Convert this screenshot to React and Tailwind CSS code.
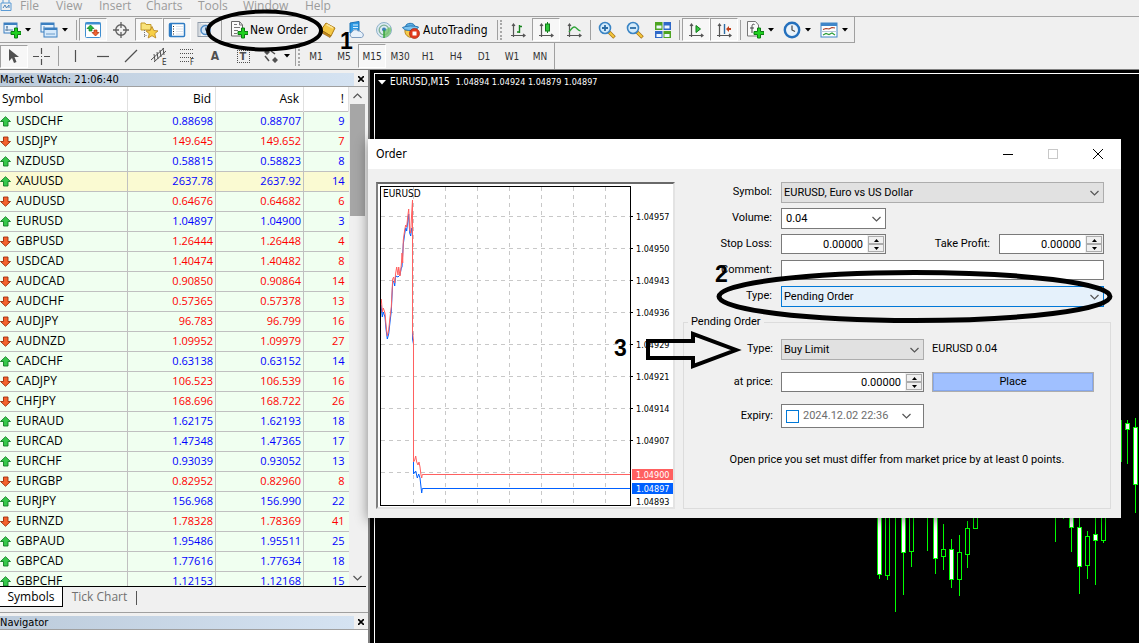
import React, { useState } from "react";

const quotes = [
  ["USDCHF", "0.88698", "0.88707", 9, "up"],
  ["USDJPY", "149.645", "149.652", 7, "down"],
  ["NZDUSD", "0.58815", "0.58823", 8, "up"],
  ["XAUUSD", "2637.78", "2637.92", 14, "up"],
  ["AUDUSD", "0.64676", "0.64682", 6, "down"],
  ["EURUSD", "1.04897", "1.04900", 3, "up"],
  ["GBPUSD", "1.26444", "1.26448", 4, "down"],
  ["USDCAD", "1.40474", "1.40482", 8, "down"],
  ["AUDCAD", "0.90850", "0.90864", 14, "down"],
  ["AUDCHF", "0.57365", "0.57378", 13, "down"],
  ["AUDJPY", "96.783", "96.799", 16, "down"],
  ["AUDNZD", "1.09952", "1.09979", 27, "down"],
  ["CADCHF", "0.63138", "0.63152", 14, "up"],
  ["CADJPY", "106.523", "106.539", 16, "down"],
  ["CHFJPY", "168.696", "168.722", 26, "down"],
  ["EURAUD", "1.62175", "1.62193", 18, "up"],
  ["EURCAD", "1.47348", "1.47365", 17, "up"],
  ["EURCHF", "0.93039", "0.93052", 13, "up"],
  ["EURGBP", "0.82952", "0.82960", 8, "down"],
  ["EURJPY", "156.968", "156.990", 22, "up"],
  ["EURNZD", "1.78328", "1.78369", 41, "down"],
  ["GBPAUD", "1.95486", "1.95511", 25, "up"],
  ["GBPCAD", "1.77616", "1.77634", 18, "up"],
  ["GBPCHF", "1.12153", "1.12168", 15, "up"],
];

const priceColor = (dir) => (dir === "up" ? "text-[#0000ff]" : "text-[#ff0000]");

// x, wick top, wick bottom, body top, body bottom, filled
const candles = [
  [504, 436, 505, 436, 500, true],
  [512, 436, 506, 436, 501, false],
  [520, 436, 538],
  [528, 436, 521, 436, 478, true],
  [536, 436, 493, 436, 477, false],
  [552, 436, 477],
  [560, 436, 500, 436, 484, true],
  [568, 450, 496, 475, 482, false],
  [576, 465, 514, 475, 505, true],
  [584, 461, 522, 478, 505, false],
  [592, 447, 494, 454, 480, false],
  [600, 436, 455, 436, 454, false],
  [680, 436, 468],
  [688, 436, 445],
  [696, 436, 478, 436, 453, true],
  [704, 436, 520, 453, 492, true],
  [712, 457, 505, 462, 491, false],
  [720, 436, 511, 460, 466, true],
  [728, 436, 469, 436, 466, false],
  [746, 346, 388],
  [752, 346, 390, 349, 355, true],
  [760, 344, 439, 353, 410, true],
];

const priceLabels = ["1.04957", "1.04950", "1.04943", "1.04936", "1.04929", "1.04921", "1.04914", "1.04907"];

const Svg = ({ size = 18, children }) => (
  <svg width={size} height={size} viewBox="0 0 18 18" fill="none" aria-hidden="true" className="shrink-0">{children}</svg>
);

const Plus = () => <path d="M11.500 7h3v3.500h3.500v3h-3.500v3.500h-3v-3.500H8v-3h3.500z" fill="#1fd11f" stroke="#0b7d12" />;

const NewChartIcon = () => (
  <Svg>
    <rect x="1" y="2" width="13" height="10" fill="#e8f3fd" stroke="#3b7fc0" />
    <path d="M1 3h13" stroke="#3b7fc0" strokeWidth="2" />
    <path d="M4 5v5M3 6h2M2 9h8" stroke="#5b7f9f" />
    <Plus />
  </Svg>
);

const ProfilesIcon = () => (
  <Svg>
    <rect x="1" y="2" width="13" height="9" fill="#e8f3fd" stroke="#3b7fc0" />
    <path d="M1 3h13" stroke="#3b7fc0" strokeWidth="2" />
    <rect x="4" y="7" width="13" height="9" fill="#d5e9fb" stroke="#3b7fc0" />
    <path d="M4 8h13" stroke="#3b7fc0" strokeWidth="2" />
    <path d="M6 13h9M4 5v4" stroke="#6b9bc9" />
  </Svg>
);

const MarketWatchIcon = () => (
  <Svg>
    <rect x="1.500" y="1.500" width="15" height="15" rx="1" fill="#fff" stroke="#3f8ed0" />
    <path d="M1.500 2.500h15" stroke="#3f8ed0" strokeWidth="2" />
    <path d="M6.500 4L10 7.500H8V10H5V7.500H3z" fill="#25b838" stroke="#0c7a1c" strokeWidth=".7" />
    <path d="M11.500 15L8 11.500h2V9h3v2.500h2z" fill="#f2622f" stroke="#a82e0a" strokeWidth=".7" />
  </Svg>
);

const TargetIcon = () => (
  <Svg>
    <circle cx="9" cy="9" r="5.200" stroke="#606060" strokeWidth="1.400" />
    <path d="M9 1v6M9 11v6M1 9h6M11 9h6" stroke="#606060" strokeWidth="1.300" />
  </Svg>
);

const StarPath = ({ x = 0, y = 0 }) => (
  <path transform={`translate(${x} ${y})`} d="M6 0l1.800 4 4.200.4-3.200 2.800 1 4.300L6 9.200 2.200 11.500l1-4.300L0 4.400 4.200 4z" fill="#f7cf45" stroke="#b5801a" strokeWidth=".8" />
);

const NavigatorIcon = () => (
  <Svg>
    <path d="M1 2h4l1 1.500h5V9H1z" fill="#f8e27a" stroke="#c29a2c" />
    <path d="M4.500 9v7M4.500 14.500H7" stroke="#777" strokeDasharray="1 1" />
    <StarPath x={6} y={5.5} />
  </Svg>
);

const TerminalIcon = () => (
  <Svg>
    <rect x="1.500" y="2.500" width="15" height="13" rx="1" fill="#fff" stroke="#2f7cc4" strokeWidth="1.500" />
    <path d="M3 3v12" stroke="#2f7cc4" strokeWidth="2" />
    <path d="M5 5.500h1M5 8h1M5 10.500h1M5 13h1" stroke="#333" />
    <path d="M8 5.500h7M8 8h7M8 10.500h7M8 13h7" stroke="#dde3ec" />
  </Svg>
);

const TesterIcon = () => (
  <Svg>
    <rect x="2" y="1.500" width="12" height="14" fill="#f5f5f5" stroke="#8e9aa8" />
    <path d="M4 2v13M5 4h8" stroke="#b9c3cd" />
    <circle cx="9.500" cy="9" r="4.500" fill="#cfe3f6" stroke="#4f8cc6" strokeWidth="1.500" />
    <path d="M9.500 6.500V9l1.500 1.500" stroke="#47627d" />
  </Svg>
);

const NewOrderIcon = () => (
  <Svg>
    <path d="M1.500.500h8L12.500 4v11h-11z" fill="#fafafa" stroke="#666" />
    <path d="M9.500.500V4h3M4 3.500h3M4 6.500h6M4 9.500h4M4 12.500h3" stroke="#777" />
    <Plus />
  </Svg>
);

const MetaEditorIcon = () => (
  <Svg>
    <path d="M2 9L7 2l9 5-4 8z" fill="#f4c744" stroke="#ae7a10" />
    <path d="M2 9l10 6-1 1.500L3 12z" fill="#c68a1c" stroke="#8f6110" strokeWidth=".6" />
    <path d="M7.500 3.500L14 7" stroke="#fbe597" strokeWidth="1.500" />
  </Svg>
);

const CloudIcon = () => (
  <Svg>
    <path d="M3 2l9-1.500V12H3z" fill="#2e9ae4" stroke="#1b72b5" />
    <path d="M6 4h5M6 6.500h5M6 9h4" stroke="#d9f0ff" />
    <path d="M5 16.500a3 3 0 010-5.500 3.500 3.500 0 016-1 3 3 0 013.500 1.500 2.600 2.600 0 010 5z" fill="#e7f1fb" stroke="#7d9cc0" />
  </Svg>
);

const SignalIcon = () => (
  <Svg>
    <circle cx="9" cy="9" r="7.500" fill="#dceaf2" stroke="#8fb2cb" />
    <circle cx="9" cy="9" r="4.800" stroke="#7fb195" strokeWidth="1.300" />
    <path d="M9 9v7.500A7.500 7.500 0 0015.500 6z" fill="#77c66e" opacity=".8" />
    <circle cx="9" cy="8.500" r="2" fill="#3b81ba" />
    <path d="M9 9v8" stroke="#36a43b" strokeWidth="1.500" />
  </Svg>
);

const AutoTradingIcon = () => (
  <Svg>
    <path d="M3 9c-.5 4 2 6.500 5.500 7.500L14 9z" fill="#f6cc4b" stroke="#b78118" />
    <path d="M3.500 5.500C4 1.500 12 1 13 5.500z" fill="#5fb2e6" stroke="#2a78b4" />
    <path d="M.500 6.500c4-2 12-2 16-.5-1 4-14 5-16 .5z" fill="#7cc3ef" stroke="#2a78b4" />
    <circle cx="12.500" cy="12.500" r="5" fill="#e23a1c" stroke="#a3230d" strokeWidth=".7" />
    <rect x="10.500" y="10.500" width="4" height="4" fill="#fff" />
  </Svg>
);

const Axes = () => <path d="M4.500 3v13M2 14.500h14M3 5l1.500-2L6 5M14 13l2 1.500-2 1.500" stroke="#555" strokeWidth="1.200" />;

const BarChartIcon = () => (
  <Svg>
    <Axes />
    <path d="M10.500 4v8M10.500 5.500H13M8 11h2.500" stroke="#16831d" strokeWidth="1.400" />
  </Svg>
);

const CandleIcon = () => (
  <Svg>
    <Axes />
    <path d="M10.500 1v11" stroke="#16831d" />
    <rect x="8.500" y="3" width="4" height="7" fill="#2fc73a" stroke="#0f7a18" />
  </Svg>
);

const LineChartIcon = () => (
  <Svg>
    <Axes />
    <path d="M4 11c2-3 3.500-5 5.500-5s2.500 3 6 4" stroke="#2fa439" strokeWidth="1.300" />
  </Svg>
);

const ZoomIcon = ({ plus }) => (
  <Svg>
    <path d="M11 11l5.500 5.500" stroke="#a9761a" strokeWidth="3.600" />
    <path d="M11.500 11.500l4.500 4.500" stroke="#f5c83c" strokeWidth="2" />
    <circle cx="7" cy="7" r="5.500" fill="#d3ebfb" stroke="#3a84c4" strokeWidth="1.600" />
    <path d={plus ? "M4 7h6M7 4v6" : "M4 7h6"} stroke="#2b6ca5" strokeWidth="1.800" />
  </Svg>
);

const TileIcon = () => (
  <Svg>
    <path d="M1 1h8v8H1zM9 10h8v7H9z" fill="#4da422" />
    <path d="M9 1h8v8H9zM1 10h8v7H1z" fill="#2e68c8" />
    <path d="M2.500 6h5M10.500 6h5M2.500 14.500h5M10.500 14.500h5" stroke="#eef7ff" strokeWidth="3" />
    <path d="M1 9.500h16M9 1v16" stroke="#f0f0f0" />
  </Svg>
);

const ScrollIcon = () => (
  <Svg>
    <Axes />
    <path d="M9 4.500L13.500 8 9 11.500z" fill="#35c940" stroke="#0f7a18" />
  </Svg>
);

const ShiftIcon = () => (
  <Svg>
    <Axes />
    <path d="M9.500 3v10" stroke="#2b6ca5" strokeWidth="1.400" />
    <path d="M11 8l3-3v2h2v2h-2v2z" fill="#c0401b" />
  </Svg>
);

const IndicatorIcon = () => (
  <Svg>
    <path d="M1.500.500h8L12.500 4v11h-11z" fill="#fafafa" stroke="#777" />
    <path d="M8.500 3.500c-2-1-2.500.5-2.500 2V12M4 7h4" stroke="#444" />
    <Plus />
  </Svg>
);

const ClockIcon = () => (
  <Svg>
    <circle cx="9" cy="9" r="7.200" fill="#eaf3fb" stroke="#2470bd" strokeWidth="2.400" />
    <path d="M9 4.500V9l3 1.500" stroke="#444" strokeWidth="1.200" />
  </Svg>
);

const TemplateIcon = () => (
  <Svg>
    <rect x="1" y="2" width="16" height="14" fill="#fff" stroke="#3f86c8" />
    <path d="M1 3.500h16" stroke="#3f86c8" strokeWidth="3" />
    <path d="M3 8.500l3-1 3 .5 3-1.500 3 .5" stroke="#a83a20" strokeWidth="1.200" />
    <path d="M1 10.500h16" stroke="#b7c9da" />
    <path d="M3 14l3-1.500 3 1 3-1.500 3 2" stroke="#2c9d38" strokeWidth="1.200" />
  </Svg>
);

const Caret = () => (
  <svg width="6" height="4" viewBox="0 0 6 4" aria-hidden="true" className="shrink-0"><path d="M0 0h6L3 3.500z" fill="#000" /></svg>
);

const Separator = () => <div className="mx-[2px] h-5 w-px shrink-0 bg-[#a0a0a0]" />;

const Grip = () => <div className="mr-px h-5 w-[3px] shrink-0 border-l-2 border-dotted border-[#a8a8a8]" />;

const ToolButton = ({ label, pressed, children }) => (
  <button
    aria-label={label}
    aria-pressed={!!pressed}
    className={`flex h-[23px] w-7 shrink-0 items-center justify-center border ${pressed ? "border-t-[#a0a0a0] border-l-[#a0a0a0] border-r-white border-b-white bg-[#f7f7f7]" : "border-transparent"}`}
  >
    {children}
  </button>
);

const MenuButton = ({ label, children }) => (
  <button aria-label={label} className="flex h-[23px] w-[37px] shrink-0 items-center gap-1 pl-[3px]">
    {children}
    <Caret />
  </button>
);

const MenuBar = () => (
  <nav className="flex h-4 shrink-0 items-start font-['Open_Sans',sans-serif] text-[12px] leading-[11px] text-[#9b9b9b]">
    <svg width="12" height="11" viewBox="0 0 12 11" fill="none" aria-hidden="true" className="mr-2 shrink-0">
      <path d="M1 3h10v7.500H1zM3 0v3M9 0v3" stroke="#5b9bd5" />
      <path d="M3 8l2-3 1.500 3L9 5v3" stroke="#4a82b8" />
    </svg>
    <a href="#file" className="w-9">File</a>
    <a href="#view" className="w-[43px]">View</a>
    <a href="#insert" className="w-[47px]">Insert</a>
    <a href="#charts" className="w-[52px]">Charts</a>
    <a href="#tools" className="w-[45px]">Tools</a>
    <a href="#window" className="w-[62px]">Window</a>
    <a href="#help">Help</a>
  </nav>
);

const MainToolbar = () => (
  <div className="flex h-[27px] shrink-0 border-t border-[#a0a0a0]">
    <div className="flex items-center border-r border-b border-[#a0a0a0]">
      <MenuButton label="New chart"><NewChartIcon /></MenuButton>
      <MenuButton label="Profiles"><ProfilesIcon /></MenuButton>
      <Separator />
      <ToolButton label="Market Watch" pressed><MarketWatchIcon /></ToolButton>
      <ToolButton label="Data Window"><TargetIcon /></ToolButton>
      <ToolButton label="Navigator" pressed><NavigatorIcon /></ToolButton>
      <ToolButton label="Terminal" pressed><TerminalIcon /></ToolButton>
      <ToolButton label="Strategy Tester"><TesterIcon /></ToolButton>
      <Separator />
      <button className="flex w-[90px] shrink-0 items-center gap-[2px] pl-[6px] text-[12px] whitespace-nowrap"><NewOrderIcon />New Order</button>
      <ToolButton label="MetaEditor"><MetaEditorIcon /></ToolButton>
      <ToolButton label="Cloud storage"><CloudIcon /></ToolButton>
      <ToolButton label="Signals"><SignalIcon /></ToolButton>
      <button className="flex w-[97px] shrink-0 items-center gap-[3px] pl-1 text-[12px] whitespace-nowrap"><AutoTradingIcon />AutoTrading</button>
      <Separator />
      <Grip />
      <ToolButton label="Bar chart"><BarChartIcon /></ToolButton>
      <ToolButton label="Candlesticks" pressed><CandleIcon /></ToolButton>
      <ToolButton label="Line chart"><LineChartIcon /></ToolButton>
      <Separator />
      <ToolButton label="Zoom in"><ZoomIcon plus /></ToolButton>
      <ToolButton label="Zoom out"><ZoomIcon /></ToolButton>
      <ToolButton label="Tile windows"><TileIcon /></ToolButton>
      <Separator />
      <ToolButton label="Auto scroll" pressed><ScrollIcon /></ToolButton>
      <ToolButton label="Chart shift" pressed><ShiftIcon /></ToolButton>
      <Separator />
      <MenuButton label="Indicators"><IndicatorIcon /></MenuButton>
      <MenuButton label="Periods"><ClockIcon /></MenuButton>
      <MenuButton label="Templates"><TemplateIcon /></MenuButton>
    </div>
  </div>
);

const drawTools = [
  ["Vertical line", "M9.500 3v12"],
  ["Horizontal line", "M3 9.500h12"],
  ["Trendline", "M3 15L15 3"],
];

const DrawToolbar = ({ period, onPeriod }) => (
  <div className="flex h-[27px] shrink-0 border-b border-[#808080]">
    <div className="flex items-center border-r border-[#a0a0a0]">
      <ToolButton label="Cursor" pressed>
        <Svg><path d="M4 2v12l3-3 2 5 2.500-1-2-5H14z" fill="#505050" /></Svg>
      </ToolButton>
      <ToolButton label="Crosshair">
        <Svg><path d="M8.500 1v6M8.500 12v6M0 9.500h6M11 9.500h6M8 9.500h1" stroke="#505050" strokeWidth="1.200" /></Svg>
      </ToolButton>
      <Separator />
      {drawTools.map(([label, d]) => (
        <ToolButton key={label} label={label}><Svg><path d={d} stroke="#505050" strokeWidth="1.200" /></Svg></ToolButton>
      ))}
      <ToolButton label="Equidistant channel">
        <Svg>
          <path d="M1 13L14 1M4 15L16 4M4 7l1 7M7 5l1 7M10 3l1 7M13 1l1 7" stroke="#505050" />
          <text x="12" y="18" fontSize="8" fill="#333">E</text>
        </Svg>
      </ToolButton>
      <ToolButton label="Fibonacci">
        <Svg>
          <path d="M2 2.500h14M2 6.500h14M2 10.500h14M2 14.500h9" stroke="#505050" strokeDasharray="1 1" />
          <text x="12" y="18" fontSize="8" fill="#333">F</text>
        </Svg>
      </ToolButton>
      <ToolButton label="Text"><span className="text-[12px] font-bold text-[#505050]">A</span></ToolButton>
      <ToolButton label="Text label">
        <span className="flex h-[13px] w-[13px] items-center justify-center border border-dotted border-[#505050] text-[11px] leading-none font-bold text-[#505050]">T</span>
      </ToolButton>
      <button aria-label="Arrows" className="flex w-9 items-center gap-1 pl-[5px]">
        <Svg>
          <path d="M2 5l3-3 3 3-3 3zM10 13l3-3 3 3-3 3z" fill="#505050" />
          <path d="M3 9l4 5M9 4l4 3" stroke="#505050" strokeWidth="1.500" />
        </Svg>
        <Caret />
      </button>
      <Separator />
      <Grip />
      {["M1", "M5", "M15", "M30", "H1", "H4", "D1", "W1", "MN"].map((p) => (
        <button
          key={p}
          onClick={() => onPeriod(p)}
          className={`flex h-6 w-7 shrink-0 items-center justify-center border text-[10px] text-[#333] ${period === p ? "border-t-[#a0a0a0] border-l-[#a0a0a0] border-r-white border-b-white bg-[#f7f7f7]" : "border-transparent"}`}
        >
          {p}
        </button>
      ))}
    </div>
  </div>
);

const PanelTitle = ({ children }) => (
  <div className="flex h-[15px] shrink-0 items-center border-b border-[#a0a0a0] text-[11px] leading-[13px]">
    <h2 className="h-[13px] flex-1 bg-linear-to-r from-[#bccbdb] to-[#d5e3f2]">{children}</h2>
    <button aria-label="Close panel" className="flex w-[14px] justify-center">
      <svg width="6" height="6" viewBox="0 0 6 6" aria-hidden="true"><path d="M0 0l6 6M6 0L0 6" stroke="#000" strokeWidth="1.600" /></svg>
    </button>
  </div>
);

const Direction = ({ dir }) => (
  <svg width="12" height="11" viewBox="0 0 12 11" aria-hidden="true" className="shrink-0">
    {dir === "up" ? (
      <path d="M5.500.700L10.500 5.500H8V10H3.500V5.500H.500z" fill="#35c94a" stroke="#117a22" strokeWidth=".9" />
    ) : (
      <path d="M5.500 10.300L10.500 5.500H8V1H3.500v4.500H.500z" fill="#f4612c" stroke="#9d2f0c" strokeWidth=".9" />
    )}
  </svg>
);

const Chevron = ({ up }) => (
  <svg width="9" height="6" viewBox="0 0 9 6" fill="none" aria-hidden="true" className="pointer-events-none shrink-0">
    <path d={up ? "M.500 5l4-4 4 4" : "M.500 1l4 4 4-4"} stroke="#555" strokeWidth="1.200" />
  </svg>
);

const MarketWatch = () => (
  <section className="flex min-h-0 flex-1 flex-col">
    <PanelTitle>Market Watch: 21:06:40</PanelTitle>
    <div className="mr-[2px] flex min-h-0 flex-1 border-b border-black font-['Open_Sans',sans-serif]">
      <div className="min-w-0 flex-1 overflow-hidden bg-white">
        <table className="w-full table-fixed border-collapse text-[12px] leading-4">
          <colgroup>
            <col />
            <col className="w-[88px]" />
            <col className="w-[88px]" />
            <col className="w-[45px]" />
          </colgroup>
          <thead>
            <tr className="h-6">
              <th className="border-r border-[#e0e0e0] px-[2px] text-left font-normal">Symbol</th>
              <th className="border-r border-[#e0e0e0] px-1 text-right font-normal">Bid</th>
              <th className="border-r border-[#e0e0e0] px-1 text-right font-normal">Ask</th>
              <th className="border-r border-[#e0e0e0] px-1 text-right font-normal">!</th>
            </tr>
          </thead>
          <tbody>
            {quotes.map(([symbol, bid, ask, spread, dir]) => (
              <tr key={symbol} className={`h-5 border-y border-[#c0c0c0] ${symbol === "XAUUSD" ? "bg-[#fafad2]" : "bg-[#f0fff0]"}`}>
                <td className="border-r border-[#c0c0c0] p-0"><span className="flex items-center gap-1"><Direction dir={dir} />{symbol}</span></td>
                <td className={`border-r border-[#c0c0c0] py-0 pr-[2px] text-right text-[11px] ${priceColor(dir)}`}>{bid}</td>
                <td className={`border-r border-[#c0c0c0] py-0 pr-[2px] text-right text-[11px] ${priceColor(dir)}`}>{ask}</td>
                <td className={`py-0 pr-1 text-right text-[11px] ${priceColor(dir)}`}>{spread}</td>
              </tr>
            ))}
          </tbody>
        </table>
      </div>
      <div className="flex w-[17px] flex-col items-center bg-[#f0f0f0]">
        <span className="flex h-[17px] items-center"><Chevron up /></span>
        <div className="h-28 w-[15px] bg-[#a6a6a6]" />
        <span className="mt-auto flex h-4 items-center"><Chevron /></span>
      </div>
    </div>
    <div className="flex h-[25px] items-start font-['Open_Sans',sans-serif] text-[12px] leading-5">
      <button className="h-[20px] w-[63px] border-r border-b border-black bg-white">Symbols</button>
      <button className="w-[73px] text-[#707070]">Tick Chart</button>
      <div className="mt-1 h-[14px] w-px bg-[#555]" />
    </div>
  </section>
);

const ChartWindow = () => (
  <main className="relative min-w-0 flex-1 overflow-hidden border-t border-l border-white bg-black">
    <h1 className="flex items-center pt-px pl-[3px] text-[10px] leading-[14px] text-white">
      <svg width="8" height="5" viewBox="0 0 8 5" aria-hidden="true" className="mr-1"><path d="M0 0h8L4 4.500z" fill="#fff" /></svg>
      EURUSD,M15
      <span className="ml-[6px] text-[9px]">1.04894 1.04924 1.04879 1.04897</span>
    </h1>
    <svg className="absolute top-0 left-0 h-full w-full" shapeRendering="crispEdges" aria-hidden="true">
      {candles.map(([x, top, bottom, bodyTop, bodyBottom, filled]) => (
        <g key={x} stroke="#00ff00">
          <path d={`M${x + 0.5} ${top}V${bottom}`} />
          {bodyBottom && <rect x={x - 1.5} y={bodyTop + 0.5} width="4" height={bodyBottom - bodyTop} fill={filled ? "#fff" : "#000"} />}
        </g>
      ))}
    </svg>
  </main>
);

const TickChart = () => (
  <div className="border-2 border-t-[#696969] border-l-[#808080] border-r-[#e3e3e3] border-b-[#e3e3e3] bg-white">
    <svg width="295" height="323" viewBox="0 0 295 323" fill="none" fontSize="9" role="img" aria-label="EURUSD tick chart">
      <g stroke="#c8c8c8" strokeDasharray="4 4" shapeRendering="crispEdges">
        {[35, 67, 99, 131, 163, 195, 227].map((x) => <path key={x} d={`M${x + 0.5} 3V321`} />)}
        {[32, 64, 96, 128, 160, 192, 224, 256, 288].map((y) => <path key={y} d={`M3 ${y + 0.5}H252`} />)}
      </g>
      <path
        d="M3 121L4.300 133L5.300 128L7 133L8 145L9.300 155L10.700 150L12 138L13.300 127L14 112L14.700 98L15.700 97L16.700 102L17.700 92L20 93L22 91L23.300 84L24 83L24.700 70L25.300 60L26.700 50L27.700 44L28.700 47L29.700 38L30.700 30L31.700 49L32.700 52L33.700 44L34.500 46V155L35.500 160V290L37.700 287L39.300 294L40.700 290L42 294L43 303L43.700 309L44.300 304.500H252"
        stroke="#0060ff"
      />
      <path
        d="M3.300 115L4.300 128L5.300 124L7 129L8 141L9.300 152L10.700 146L12 133L13.300 123L14 109L14.700 95L15.700 93L16.700 99L17.700 89L18.700 83L20 91L20.700 83L22 92L23.300 81L24 69L24.700 79L25.300 56L26.700 46L27.700 41L28.700 43L29.700 33L30.700 25L31.700 46L32.700 49L33.700 29L34.500 16V147L35.500 157V278L36.700 276L37.700 272L38.700 278L40 281L41 278L42 283L43 291L43.700 294L44.300 290.500H252"
        stroke="#ff6060"
      />
      <text x="5" y="13" fontSize="10" fill="#000">EURUSD</text>
      <rect x="2.500" y="2.500" width="250" height="319" stroke="#000" shapeRendering="crispEdges" />
      <path d="M253 32.500h2M253 64.500h2M253 96.500h2M253 128.500h2M253 160.500h2M253 192.500h2M253 224.500h2M253 256.500h2" stroke="#000" />
      <rect x="254" y="285" width="41" height="11" fill="#ff6060" />
      <rect x="254" y="299" width="41" height="11" fill="#0060ff" />
      <g fill="#000">
        {priceLabels.map((p, i) => <text key={p} x="258" y={36 + i * 32}>{p}</text>)}
        <text x="258" y="321">1.04893</text>
      </g>
      <text x="258" y="294" fill="#fff">1.04900</text>
      <text x="258" y="308" fill="#fff">1.04897</text>
    </svg>
  </div>
);

const Label = ({ htmlFor, children }) => (
  <label htmlFor={htmlFor} className="w-[89px] shrink-0 text-right leading-5">{children}</label>
);

const Select = ({ id, options, className }) => (
  <div className={`relative flex h-[21px] items-center border ${className}`}>
    <select id={id} className="h-full w-full appearance-none bg-transparent pt-px pl-[2px] outline-none">
      {options.map((o) => <option key={o}>{o}</option>)}
    </select>
    <span className="pointer-events-none absolute right-1 flex"><Chevron /></span>
  </div>
);

const Spinner = ({ id, className }) => (
  <div className={`flex h-5 items-center border border-[#7a7a7a] bg-white ${className}`}>
    <input id={id} defaultValue="0.00000" className="h-full w-full min-w-0 flex-1 pr-1 text-right outline-none" />
    <div className="flex h-full w-[18px] flex-col bg-[#f0f0f0] p-px">
      <button aria-label="Increase" className="flex flex-1 items-center justify-center border border-[#acacac] bg-[#f0f0f0]">
        <svg width="5" height="3" viewBox="0 0 5 3" aria-hidden="true"><path d="M0 3h5L2.500 0z" /></svg>
      </button>
      <button aria-label="Decrease" className="flex flex-1 items-center justify-center border border-[#acacac] bg-[#f0f0f0]">
        <svg width="5" height="3" viewBox="0 0 5 3" aria-hidden="true"><path d="M0 0h5L2.500 3z" /></svg>
      </button>
    </div>
  </div>
);

const OrderDialog = () => (
  <section role="dialog" aria-label="Order" className="absolute top-[139px] left-[368px] w-[753px] bg-[#f0f0f0] text-[11px] shadow-[0_2px_12px_rgba(0,0,0,0.45)]">
    <header className="flex h-[30px] items-center bg-white pl-2">
      <h2 className="flex-1 text-[12px]">Order</h2>
      <button aria-label="Minimize" className="flex w-[45px] justify-center"><span className="h-px w-[10px] bg-black" /></button>
      <button aria-label="Maximize" className="flex w-[45px] justify-center"><span className="h-[10px] w-[10px] border border-[#c8c8c8]" /></button>
      <button aria-label="Close" className="flex w-[46px] justify-center">
        <svg width="10" height="10" viewBox="0 0 10 10" aria-hidden="true"><path d="M0 0l10 10M10 0L0 10" stroke="#000" /></svg>
      </button>
    </header>
    <form className="flex items-start gap-2 pt-[13px] pr-[10px] pb-[9px] pl-2" onSubmit={(e) => e.preventDefault()}>
      <TickChart />
      <div className="min-w-0 flex-1 font-[Roboto,sans-serif]">
        <div className="flex flex-col gap-[5px] pr-[7px]">
          <div className="flex gap-[9px]">
            <Label htmlFor="symbol">Symbol:</Label>
            <Select id="symbol" options={["EURUSD, Euro vs US Dollar"]} className="flex-1 border-[#adadad] bg-[#e1e1e1]" />
          </div>
          <div className="flex gap-[9px]">
            <Label htmlFor="volume">Volume:</Label>
            <Select id="volume" options={["0.04"]} className="w-[105px] border-[#7a7a7a] bg-white pl-[2px]" />
          </div>
          <div className="flex h-[21px] gap-[9px]">
            <Label htmlFor="sl">Stop Loss:</Label>
            <Spinner id="sl" className="w-[105px]" />
            <label htmlFor="tp" className="ml-auto leading-5">Take Profit:</label>
            <Spinner id="tp" className="w-[105px]" />
          </div>
          <div className="flex h-[21px] gap-[9px]">
            <Label htmlFor="comment">Comment:</Label>
            <input id="comment" className="h-5 min-w-0 flex-1 border border-[#7a7a7a] bg-white px-1" />
          </div>
          <div className="flex gap-[9px]">
            <Label htmlFor="type">Type:</Label>
            <Select id="type" options={["Pending Order"]} className="flex-1 border-[#0078d7] bg-[#e5f1fb]" />
          </div>
        </div>
        <fieldset className="mt-2 border border-[#dcdcdc] pt-[10px] pb-10">
          <legend className="ml-1 px-[3px] leading-[14px]">Pending Order</legend>
          <div className="flex gap-2">
            <Label htmlFor="pending">Type:</Label>
            <Select id="pending" options={["Buy Limit"]} className="w-[143px] border-[#adadad] bg-[#e1e1e1]" />
            <span className="leading-5">EURUSD 0.04</span>
          </div>
          <div className="mt-3 flex gap-2">
            <Label htmlFor="price">at price:</Label>
            <Spinner id="price" className="w-[143px]" />
            <button className="h-5 w-[162px] border border-[#adadad] bg-[#a0c0ff] outline-1 -outline-offset-2 outline-[#86a8ee]">Place</button>
          </div>
          <div className="mt-3 flex items-center gap-2">
            <Label htmlFor="expiry">Expiry:</Label>
            <div className="flex h-6 w-[143px] items-center border border-[#7a7a7a] bg-white pr-3 pl-1">
              <input id="expiry" type="checkbox" className="h-[13px] w-[13px] shrink-0 appearance-none border border-[#0078d7] bg-white" />
              <input aria-label="Expiry date" defaultValue="2024.12.02 22:36" className="ml-1 w-[92px] min-w-0 text-[#6d6d6d] outline-none" />
              <span className="ml-auto"><Chevron /></span>
            </div>
          </div>
          <p className="mt-6 text-center leading-4">Open price you set must differ from market price by at least 0 points.</p>
        </fieldset>
      </div>
    </form>
  </section>
);

// hand-drawn step markers lying over the terminal
const StepMarks = () => (
  <svg className="pointer-events-none absolute top-0 left-0 h-full w-full" fill="none" stroke="#000" strokeWidth="4" aria-hidden="true">
    <ellipse cx="264.500" cy="30.500" rx="56.500" ry="19" />
    <ellipse cx="914.500" cy="296.500" rx="195.500" ry="24" strokeWidth="5" />
    <path d="M648 341H693V334L736 350L693 366V358H648Z" />
    <g fill="#000" stroke="none" fontSize="23" fontWeight="bold" fontFamily='"Liberation Sans", sans-serif'>
      <text x="340" y="49">1</text>
      <text x="715" y="282">2</text>
      <text x="614" y="356">3</text>
    </g>
  </svg>
);

const App = () => {
  const [period, setPeriod] = useState("M15");

  return (
    <div className="relative flex h-screen flex-col overflow-hidden bg-[#f0f0f0] font-['DejaVu_Sans_Condensed','Open_Sans',sans-serif] text-black">
      <MenuBar />
      <MainToolbar />
      <DrawToolbar period={period} onPeriod={setPeriod} />
      <div className="flex min-h-0 flex-1">
        <aside className="flex w-[368px] shrink-0 flex-col pt-[2px]">
          <MarketWatch />
          <section className="border-t border-[#a0a0a0] pt-[2px]">
            <PanelTitle>Navigator</PanelTitle>
            <div className="h-[13px] bg-white" />
          </section>
        </aside>
        <div className="flex min-w-0 flex-1 border-l-2 border-[#808080] bg-black pt-[3px] pl-[4px]">
          <ChartWindow />
        </div>
      </div>
      <OrderDialog />
      <StepMarks />
    </div>
  );
};

export default App;
